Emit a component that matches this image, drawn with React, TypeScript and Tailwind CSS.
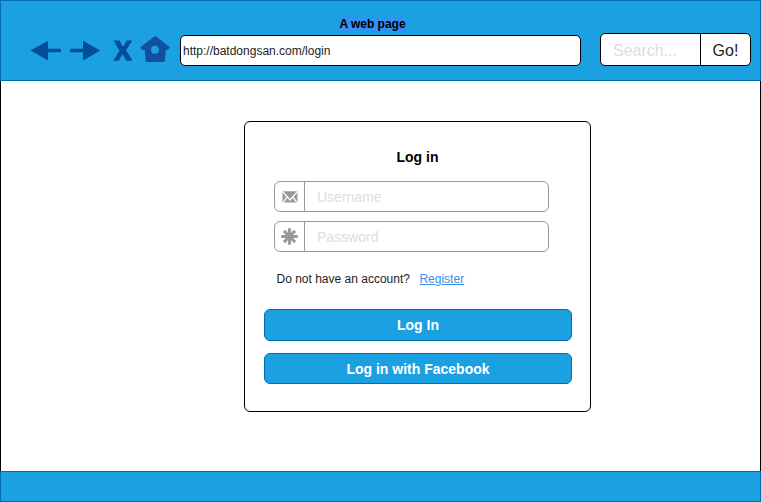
import React from 'react';

function NavIcons() {
  return (
    <svg className="block shrink-0" width="141" height="32" viewBox="30 34 141 32" fill="#004D99">
      <path d="M30.5 50.5 48 40.8V48.8h12.9v3.5H48v8.1z" />
      <path d="M100.2 50.5 83 40.8V48.8H70.2v3.5H83v8.1z" />
      <path d="M113.5 40.5h6l3.6 6.4 3.7-6.4h5.6l-6.3 9.8 6.5 10.4h-6.3l-3.8-6.8-3.8 6.8h-5.5l6.3-10.1z" />
      <path
        fill="#12509E"
        fillRule="evenodd"
        d="M154.2 36.4Q155.2 35.7 156.2 36.4L169.3 46.8Q169.9 47.4 169.3 48.1L168 49.7 165.8 49.9 164.8 61.2Q164.7 62.1 163.8 62.1H146.8Q145.9 62.1 145.8 61.2L144.7 49.9 142.5 49.9 140.7 48.4Q140.1 47.6 140.8 47zM155 45.7a4 4 0 1 0 0 8 4 4 0 0 0 0-8z"
      />
    </svg>
  );
}

function MailIcon() {
  return (
    <svg className="block" width="16" height="12" viewBox="0 0 16 12">
      <rect x=".5" y=".3" width="15" height="11.2" rx="1.2" fill="#999" />
      <path d="M.7.6 8 8.9 15.3.6M1.3 11.4 5.2 5.8M14.7 11.4l-3.9-5.6" fill="none" stroke="#fff" strokeWidth="1.3" />
    </svg>
  );
}

function StarIcon() {
  return (
    <svg className="block" width="17" height="17" viewBox="-8.5 -8.5 17 17" fill="#999">
      <path d="M-1.6-8.2h3.2L1.4 0l.2 8.2h-3.2L-1.4 0z" />
      <path transform="rotate(45)" d="M-1.6-7.8h3.2L1.4 0l.2 7.8h-3.2L-1.4 0z" />
      <path transform="rotate(90)" d="M-1.6-8.2h3.2L1.4 0l.2 8.2h-3.2L-1.4 0z" />
      <path transform="rotate(135)" d="M-1.6-7.8h3.2L1.4 0l.2 7.8h-3.2L-1.4 0z" />
      <circle r="3.6" />
    </svg>
  );
}

function Field({ icon, label }: { icon: React.ReactNode; label: string }) {
  return (
    <div className="flex h-[31px] w-[275px] rounded-[6px] border border-[#999] bg-white">
      <div className="flex w-[30px] shrink-0 items-center justify-center border-r border-[#999]">{icon}</div>
      <span className="pl-3 text-sm leading-[30px] text-[#DDDDDD]">{label}</span>
    </div>
  );
}

export default function App() {
  return (
    <div className="flex h-[502px] w-[761px] flex-col bg-white font-['Liberation_Sans',Arial,sans-serif] text-black">
      <header className="flex h-[81px] shrink-0 border border-[#006EAF] bg-[#1BA1E2]">
        <div className="ml-[29px] mt-[33px] w-[150px] shrink-0">
          <NavIcons />
        </div>
        <div className="flex w-[401px] shrink-0 flex-col pt-4">
          <div className="flex h-[18px] w-[385px] justify-center">
            <h1 className="h-[14px] bg-[#3390F5] text-xs font-bold leading-[14px]">A web page</h1>
          </div>
          <div className="h-[31px] rounded-[5px] border border-black bg-white pl-0.5 text-xs leading-[31px] text-[#222]">
            http://batdongsan.com/login
          </div>
        </div>
        <div className="ml-[19px] mt-8 flex h-[33px] w-[151px] shrink-0 rounded-[5px] border border-black bg-white text-base leading-[33px]">
          <div className="w-[100px] border-r border-black pl-3 text-[#DDDDDD]">Search...</div>
          <div className="flex-1 text-center text-[#222]">Go!</div>
        </div>
      </header>

      <main className="flex flex-1 justify-center border-x border-black pl-[74px] pt-10">
        <section className="h-[291px] w-[347px] rounded-md border border-black bg-white">
          <h2 className="mt-[27px] text-center text-sm font-bold leading-4">Log in</h2>
          <div className="ml-[29px] mt-4 flex flex-col gap-[9px]">
            <Field icon={<MailIcon />} label="Username" />
            <Field icon={<StarIcon />} label="Password" />
          </div>
          <p className="ml-[31.5px] mt-5 flex h-[14px] gap-[9.5px] text-xs leading-[14px] text-[#222]">
            <span>Do not have an account?</span>
            <a className="text-[#3A8EE6] underline">Register</a>
          </p>
          <div className="ml-[19px] mt-[23px] flex w-[308px] flex-col gap-3 text-center text-sm font-bold leading-[30px] text-white">
            <button className="h-8 rounded-[6px] border border-[#006EAF] bg-[#1BA1E2]">Log In</button>
            <button className="h-[31px] rounded-[6px] border border-[#006EAF] bg-[#1BA1E2]">Log in with Facebook</button>
          </div>
        </section>
      </main>

      <footer className="h-[31px] shrink-0 border border-[#006EAF] bg-[#1BA1E2]" />
    </div>
  );
}
